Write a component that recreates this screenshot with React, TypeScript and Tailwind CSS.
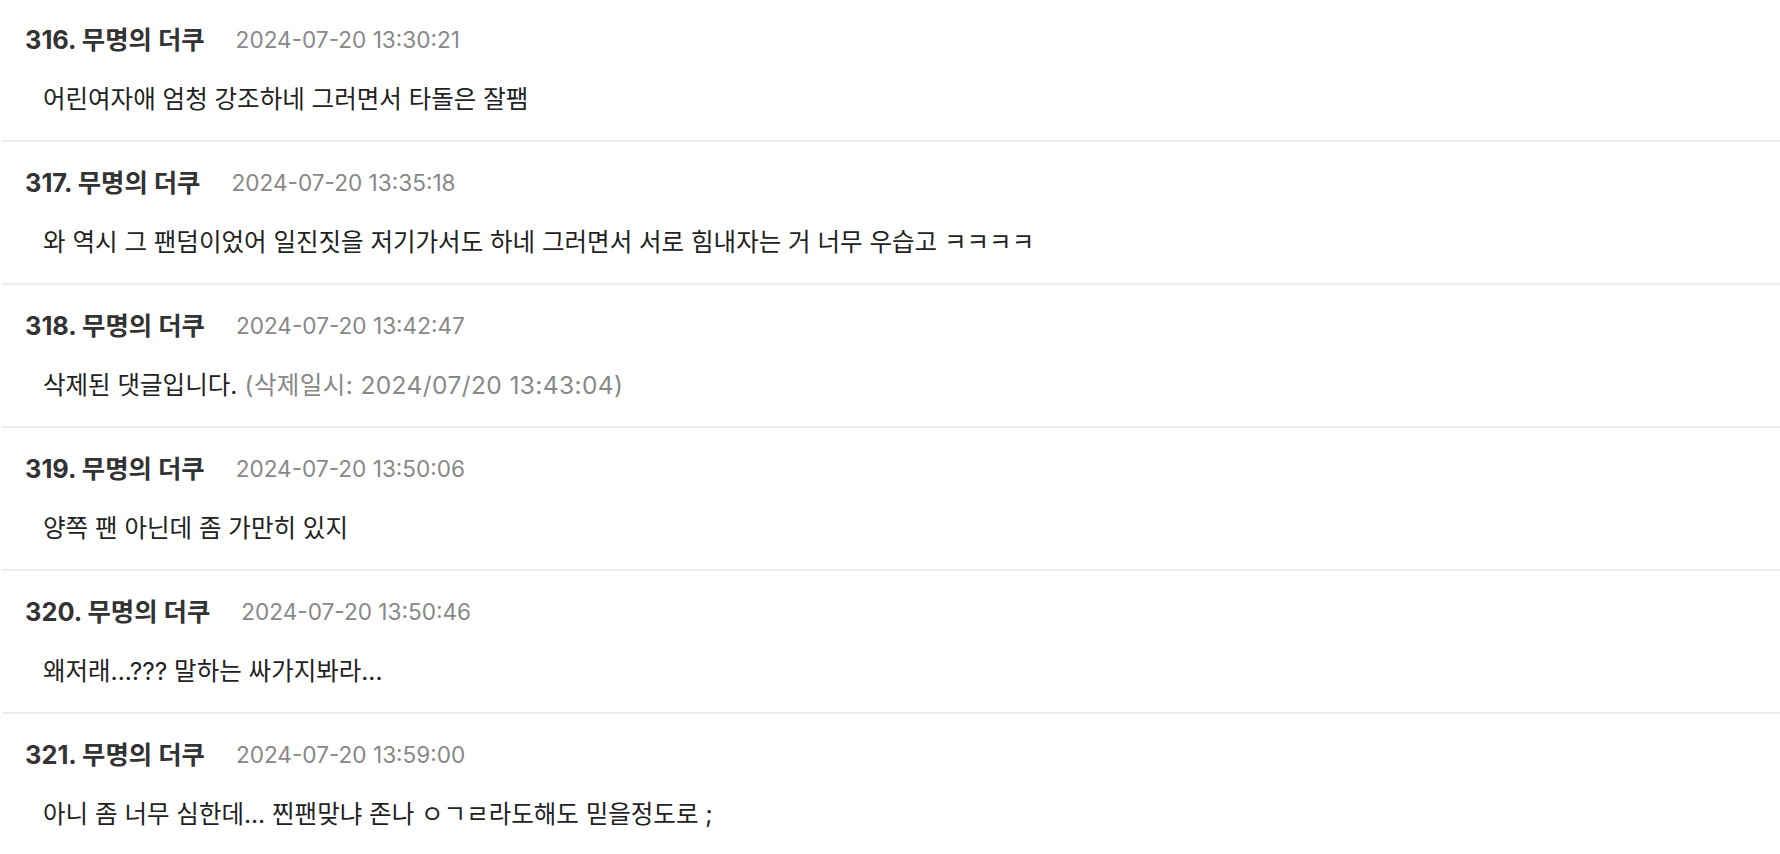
type Comment = {
	no: number;
	name: string;
	date: string;
	body: string;
	deletedAt?: string;
};

const comments: Comment[] = [
	{ no: 316, name: "무명의 더쿠", date: "2024-07-20 13:30:21", body: "어린여자애 엄청 강조하네 그러면서 타돌은 잘팸" },
	{ no: 317, name: "무명의 더쿠", date: "2024-07-20 13:35:18", body: "와 역시 그 팬덤이었어 일진짓을 저기가서도 하네 그러면서 서로 힘내자는 거 너무 우습고 ㅋㅋㅋㅋ" },
	{ no: 318, name: "무명의 더쿠", date: "2024-07-20 13:42:47", body: "삭제된 댓글입니다.", deletedAt: "2024/07/20 13:43:04" },
	{ no: 319, name: "무명의 더쿠", date: "2024-07-20 13:50:06", body: "양쪽 팬 아닌데 좀 가만히 있지" },
	{ no: 320, name: "무명의 더쿠", date: "2024-07-20 13:50:46", body: "왜저래...??? 말하는 싸가지봐라..." },
	{ no: 321, name: "무명의 더쿠", date: "2024-07-20 13:59:00", body: "아니 좀 너무 심한데... 찐팬맞냐 존나 ㅇㄱㄹ라도해도 믿을정도로 ;" },
];

function CommentItem({ c }: { c: Comment }) {
	return (
		<li className="ml-[2px] border-b-2 border-[#eeeeee] pt-[24px] pb-[25px]">
			<div className="flex items-center h-[34px] pl-[23px]">
				<span className="text-[25.4px] font-bold text-[#333333]">
					{c.no}. {c.name}
				</span>
				<span className="ml-[31px] text-[22.6px] text-[#888888]">{c.date}</span>
			</div>
			<p className="mt-[26px] h-[32px] leading-[32px] pl-[41px] text-[24.5px] text-[#222222] whitespace-nowrap">
				{c.body}
				{c.deletedAt && (
					<span className="text-[#888888] tracking-[0.4px]"> (삭제일시: {c.deletedAt})</span>
				)}
			</p>
		</li>
	);
}

export default function App() {
	return (
		<div className="min-h-screen bg-white font-['Inter','Noto_Sans_CJK_KR',sans-serif]">
			<ul className="-mt-px">
				{comments.map((c) => (
					<CommentItem key={c.no} c={c} />
				))}
			</ul>
		</div>
	);
}
